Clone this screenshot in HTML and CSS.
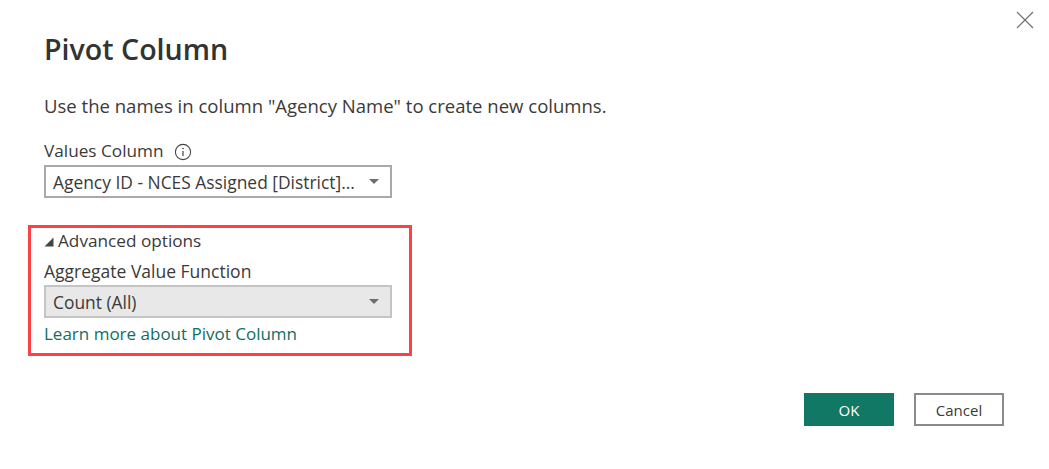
FILE: index.html
```html
<!DOCTYPE html>
<html lang="en">
<head>
<meta charset="utf-8">
<title>Pivot Column</title>
<link rel="stylesheet" href="styles.css">
</head>
<body>
<div class="dialog">
  <svg class="close" width="18" height="18" viewBox="0 0 18 18"><path d="M1 1L17 17M17 1L1 17" stroke="#6e6e6e" stroke-width="1.1" fill="none"/></svg>
  <h1 class="title">Pivot Column</h1>
  <p class="desc">Use the names in column "Agency Name" to create new columns.</p>
  <div class="label-row">
    <span class="label">Values Column</span>
    <svg class="info" width="18" height="18" viewBox="0 0 18 18"><circle cx="9" cy="9" r="7.6" stroke="#444" stroke-width="1.1" fill="none"/><path d="M9 8v5" stroke="#444" stroke-width="1.2"/><circle cx="9" cy="5.6" r=".8" fill="#444"/></svg>
  </div>
  <div class="select">
    <span>Agency ID - NCES Assigned [District]...</span>
    <span class="caret"></span>
  </div>
  <section class="advanced">
    <div class="adv-head"><svg class="tri" width="10" height="10" viewBox="0 0 10 10"><path d="M9.5 .5V9.500H.5Z" fill="#444"/></svg><span>Advanced options</span></div>
    <div class="label agg">Aggregate Value Function</div>
    <div class="select select-grey">
      <span>Count (All)</span>
      <span class="caret"></span>
    </div>
    <a class="link" href="#">Learn more about Pivot Column</a>
  </section>
  <div class="actions">
    <button class="btn btn-ok">OK</button>
    <button class="btn btn-cancel">Cancel</button>
  </div>
</div>
</body>
</html>
```
FILE: styles.css
```css
* { box-sizing: border-box; }
html, body { margin: 0; padding: 0; background: #fff; }
body { width: 1049px; height: 469px; overflow: hidden; font-family: "Open Sans", "Noto Sans", sans-serif; color: #3b3a39; }
.dialog { position: relative; display: flex; flex-direction: column; align-items: flex-start; padding: 29px 45px 0 44px; height: 469px; }
.close { position: absolute; left: 1016px; top: 11px; }
.title { margin: 0; font-size: 28.6px; line-height: 40px; font-weight: 600; color: #333; }
.desc { margin: 19px 0 0; font-size: 18.55px; line-height: 36px; }
.label-row { display: flex; align-items: center; gap: 11px; margin-top: 15px; height: 24px; }
.label { font-size: 17.2px; line-height: 24px; }
.info { margin-top: 2px; }
.select { display: flex; align-items: center; justify-content: space-between; width: 348px; height: 33px; margin-top: 2px; padding: 0 11px 0 7px; border: 2px solid #a9a9a9; background: #fff; font-size: 17.4px; white-space: nowrap; overflow: hidden; }
.caret { width: 0; height: 0; border-left: 5px solid transparent; border-right: 5px solid transparent; border-top: 5px solid #6e6e6e; flex: none; }
.select-grey { background: #e8e8e8; border-color: #c4c4c4; margin-top: 2px; }
.advanced { display: flex; flex-direction: column; align-items: flex-start; width: 384px; height: 131px; margin: 27px 0 0 -16px; padding: 1px 0 0 13px; border: 3px solid #fb4245; }
.adv-head { display: flex; align-items: center; gap: 4px; font-size: 17.2px; line-height: 24px; height: 24px; }
.tri { margin-top: 2px; }
.agg { margin-top: 6px; font-size: 17.5px; }
.link { margin-top: 4px; font-size: 17px; line-height: 24px; color: #0f6e62; text-decoration: none; }
.actions { display: flex; gap: 20px; align-self: flex-end; margin-top: 37px; }
.btn { width: 90px; height: 33px; padding: 0; font-family: inherit; font-size: 15px; cursor: pointer; }
.btn-ok { background: #117865; border: 0; color: #fff; }
.btn-cancel { background: #fff; border: 2px solid #8a8a8a; color: #3b3a39; }
```
